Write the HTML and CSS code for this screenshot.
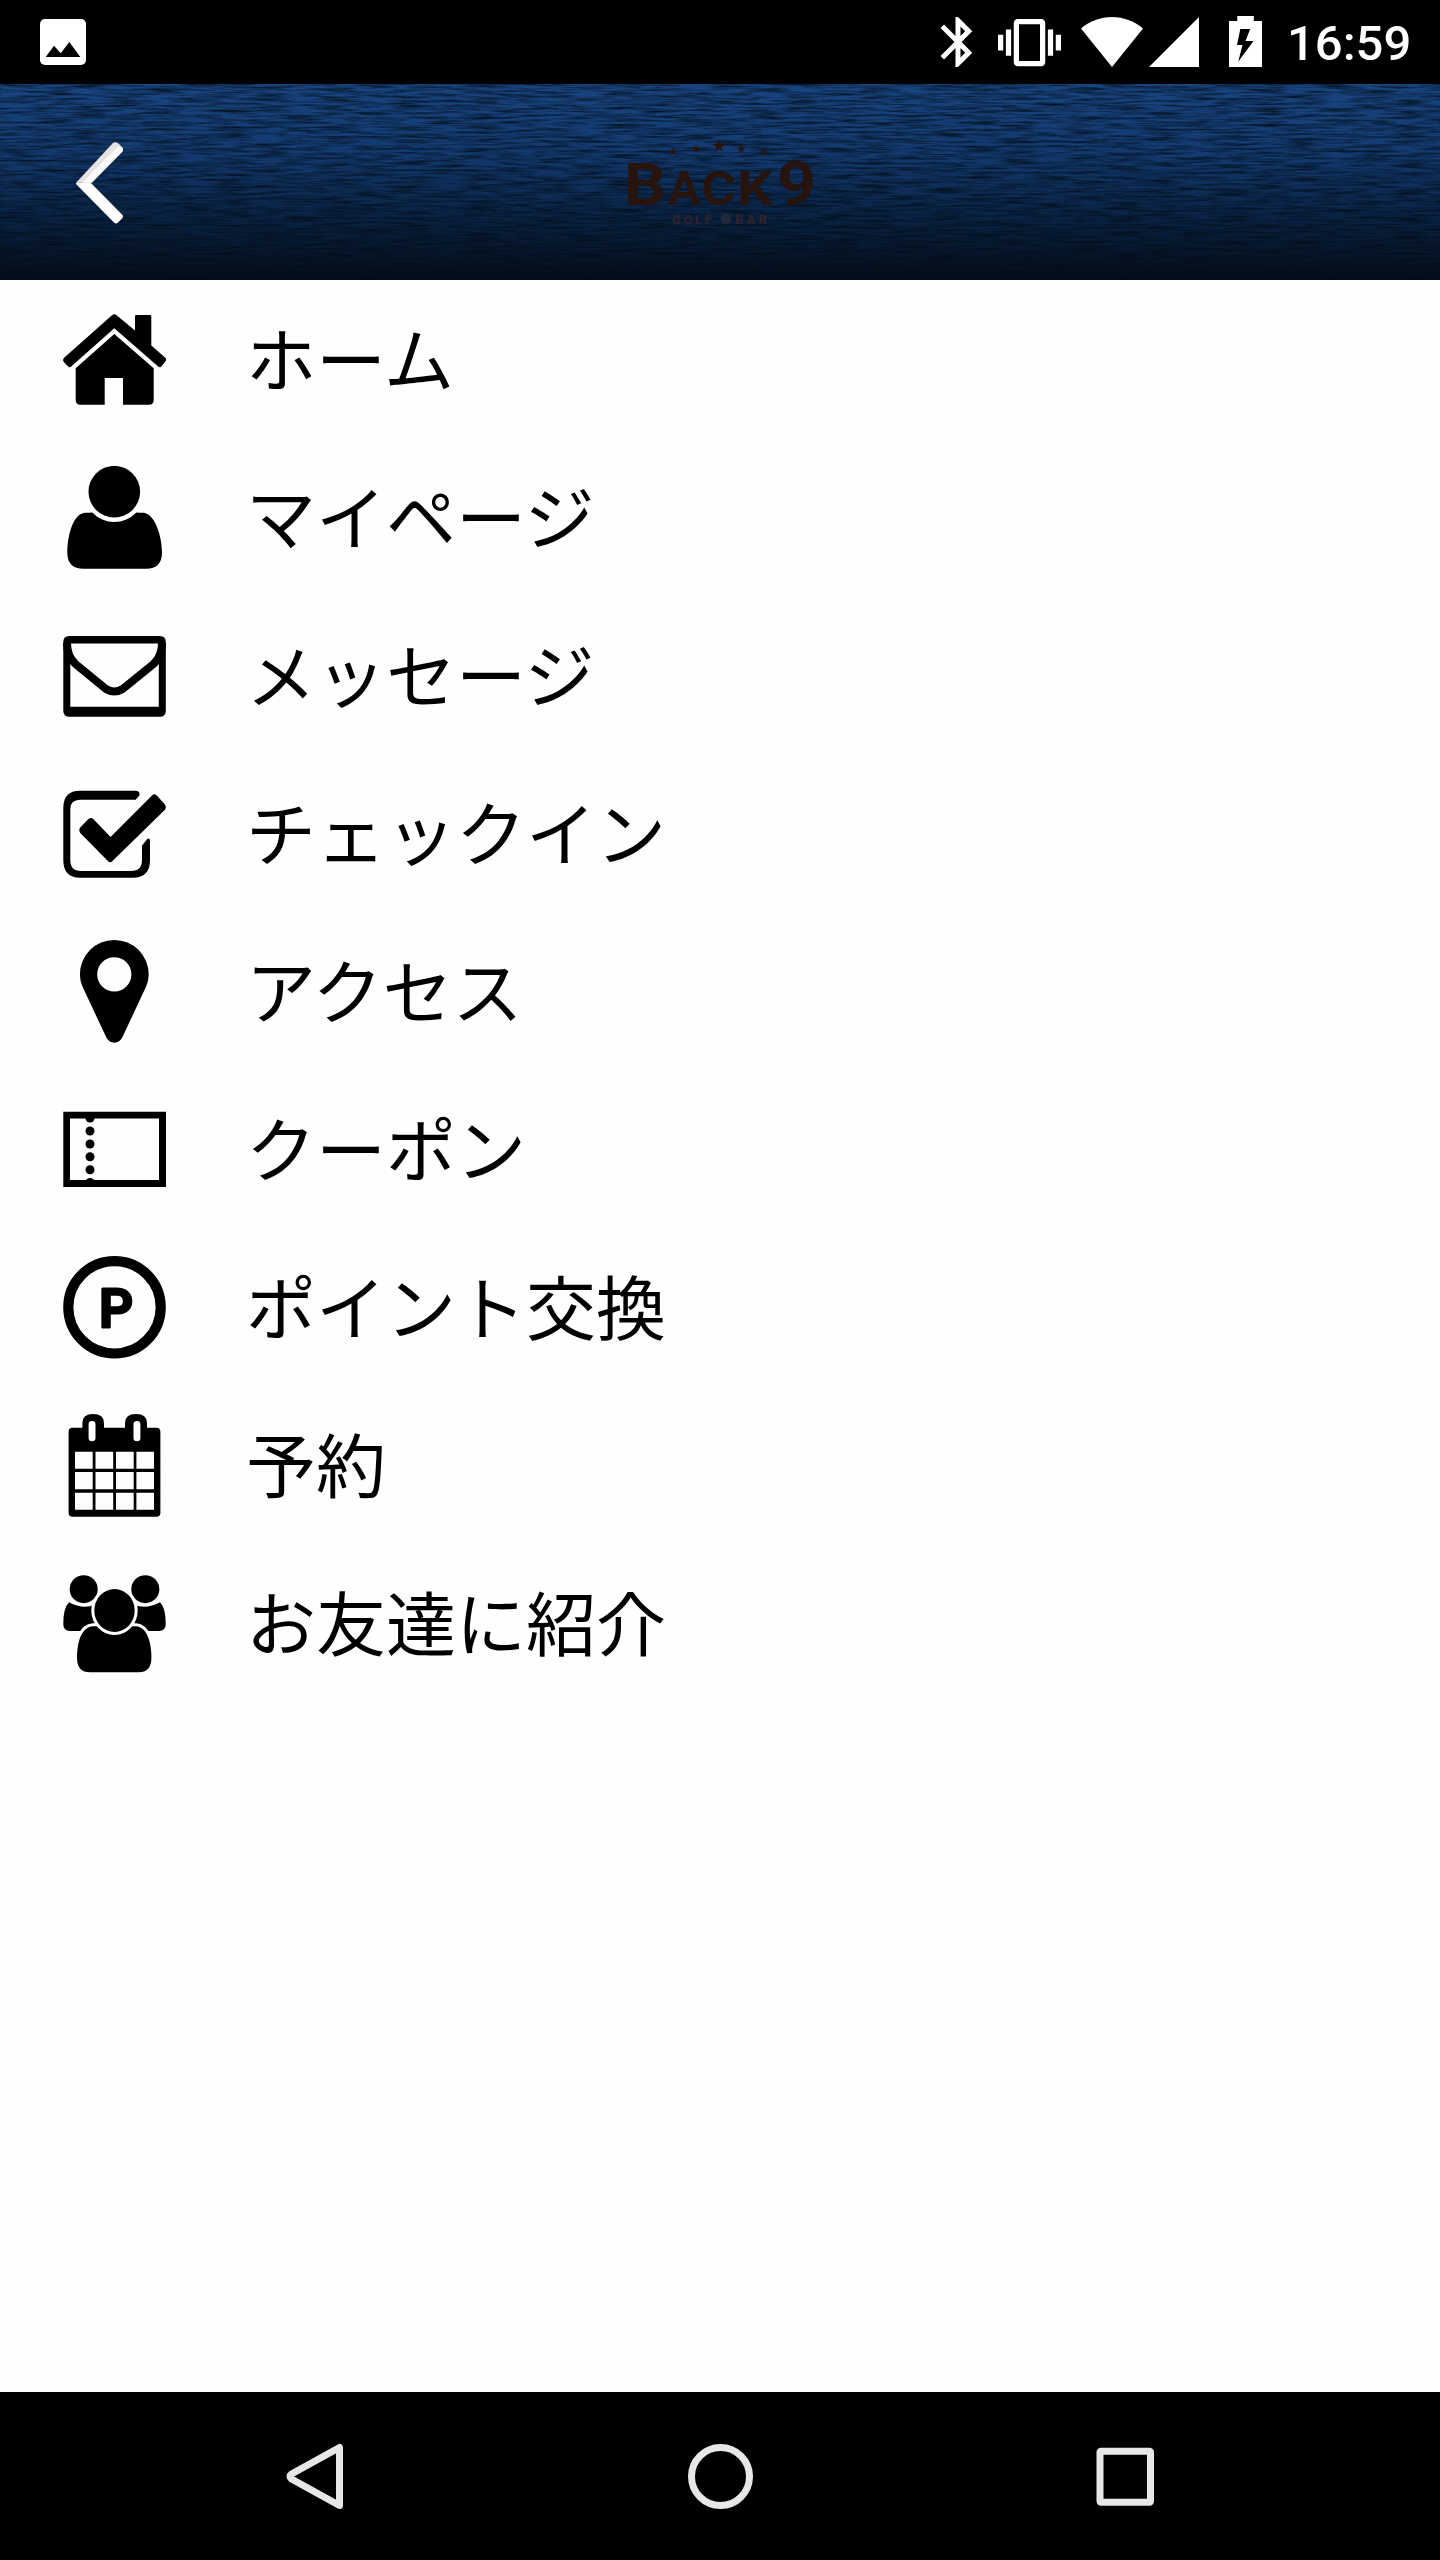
FILE: index.html
```html
<!DOCTYPE html>
<html lang="ja">
<head>
<meta charset="utf-8">
<title>BACK9 メニュー</title>
<link rel="stylesheet" href="styles.css">
</head>
<body>
<div class="screen">
  <div class="status">
    <svg class="status-photo" width="46" height="46" viewBox="0 0 46 46"><rect width="46" height="46" rx="5" fill="#fff"/><path d="M5.7 38 14 26.7l6.7 7.6L29.3 23l11 15z"/></svg>
    <div class="status-right">
      <svg class="bt" width="60" height="60" viewBox="0 0 24 24"><path d="M17.71 7.71L12 2h-1v7.59L6.41 5 5 6.41 10.59 12 5 17.59 6.41 19 11 14.41V22h1l5.71-5.71-4.3-4.29 4.3-4.29zM13 5.83l1.88 1.88L13 9.59V5.83zm1.88 10.46L13 18.17v-3.76l1.88 1.88z"/></svg>
      <svg class="vib" width="63" height="63" viewBox="0 0 24 24"><path d="M0 15h2V9H0v6zm3 2h2V7H3v10zm19-8v6h2V9h-2zm-3 8h2V7h-2v10zM16.5 3h-9C6.67 3 6 3.67 6 4.5v15c0 .83.67 1.5 1.5 1.5h9c.83 0 1.5-.67 1.5-1.5v-15c0-.83-.67-1.5-1.5-1.5zM16 19H8V5h8v14z"/></svg>
      <svg class="wifi" width="62" height="50" viewBox="0 0 62 50"><path d="M0 11.500C9 4 19.500 0 31 0s22 4 31 11.500L31 50z"/></svg>
      <svg class="cell" width="50" height="50" viewBox="0 0 50 50"><path d="M0 50h50V0z"/></svg>
      <svg class="batt" width="33" height="51" viewBox="0 0 33 51"><path fill-rule="evenodd" d="M8.300 0h16.500v5H33v46H0V5h8.300zM11.300 13 8 29h5.500L9.200 45.700 24.500 25H16.500L21.200 13z"/></svg>
      <span class="time">16:59</span>
    </div>
  </div>

  <header class="bar">
    <svg class="grain" width="1440" height="196">
      <filter id="grain" x="0" y="0" width="100%" height="100%" color-interpolation-filters="sRGB">
        <feTurbulence type="fractalNoise" baseFrequency="0.028 0.42" numOctaves="4" seed="12"/>
        <feColorMatrix values="0 0 0 0 0.01  0 0 0 0 0.05  0 0 0 0 0.09  1.700 0 0 0 -0.600"/>
      </filter>
      <rect width="1440" height="196" filter="url(#grain)"/>
    </svg>
    <svg class="back" width="60" height="92" viewBox="70 136 60 92">
      <path d="m112.500 143.500q3.500-2.500 6.500.5l3 3q2 2 0 5L92 182.700 76 182.700z" fill="#e6e2e4"/>
      <path d="m118 146.500 4 .8q2 2 0 4.700L91 182.700H82z" fill="#fbfafb"/>
      <path d="M76 182.700H90.700L122 214.500q2 2 0 4l-4 4q-2 2-4 0L76.500 184.500z" fill="#fff"/>
    </svg>
    <svg class="logo" width="200" height="96" viewBox="620 134 200 96">
      <defs><path id="star" d="M0-7 1.700-2.200 6.700-2.200 2.700.9 4.100 5.700 0 2.800-4.100 5.700-2.700.9-6.700-2.200-1.700-2.200z"/></defs>
      <use href="#star" transform="translate(673 151.500) scale(.6)"/>
      <use href="#star" transform="translate(696 149) scale(.72)"/>
      <use href="#star" transform="translate(719 146)"/>
      <use href="#star" transform="translate(741 149) scale(.72)"/>
      <use href="#star" transform="translate(764 152) scale(.6)"/>
      <text class="logo-big" x="624" y="204.500" textLength="42" lengthAdjust="spacingAndGlyphs">B</text>
      <text class="logo-small" x="667.500" y="204.500" textLength="33" lengthAdjust="spacingAndGlyphs">A</text>
      <text class="logo-small" x="701.500" y="204.500" textLength="34" lengthAdjust="spacingAndGlyphs">C</text>
      <text class="logo-small" x="737" y="204.500" textLength="36" lengthAdjust="spacingAndGlyphs">K</text>
      <text class="logo-nine" x="777" y="204.500" textLength="39" lengthAdjust="spacingAndGlyphs">9</text>
      <text class="logo-sub" x="672 683.500 695 704.500" y="223.500">GOLF</text>
      <circle cx="726" cy="218.500" r="5.500" class="ball"/>
      <text class="logo-sub" x="735 746.500 758.500" y="223.500">BAR</text>
    </svg>
  </header>

  <main class="menu">
    <div class="item">
      <svg class="icon" viewBox="0 0 104 104">
        <path d="M49 7.200q2.300-1.900 4.600 0L72 22.500V8.300q0-1.300 1.300-1.300h13.700q1.300 0 1.300 1.300V37.500L102 49.500q2 2 .3 4L98.500 58.300q-1.600 1.800-3.400.2L51.300 20.300 8.200 58.500q-1.800 1.600-3.400-.2L.7 53.700q-1.400-2 .4-4z"/>
        <path d="M51.300 26 90.700 60.300V92q0 4.700-4.700 4.700H60V70H41.700V96.700H17.400q-4.700 0-4.700-4.700V60.300z"/>
      </svg>
      <span class="label">ホーム</span>
    </div>
    <div class="item">
      <svg class="icon" viewBox="0 0 104 104">
        <circle cx="51.300" cy="25.700" r="25.800"/>
        <path d="M22 46.700q4.500 0 7.300-.2a30 30 0 0 0 44 0q3.500.2 7.300.2C92 48 99 70 99 86.500q0 16.200-16 16.200H20.500q-16.200 0-16.200-16.200C4.300 70 10 47.500 22 46.700z"/>
      </svg>
      <span class="label">マイページ</span>
    </div>
    <div class="item">
      <svg class="icon" viewBox="0 0 104 104">
        <path fill-rule="evenodd" d="M6.300 12h90.500q6 0 6 6V86.700q0 6-6 6H6.300q-6 0-6-6V18q0-6 6-6zM7.300 19.500V82.700H95.800V19.500z"/>
        <path d="M4 19C4 30 8 36 12.500 40L43 65q8.300 5 16.600 0L90.500 40C95 36 99 30 99 19" fill="none" stroke="#000" stroke-width="8"/>
      </svg>
      <span class="label">メッセージ</span>
    </div>
    <div class="item">
      <svg class="icon" viewBox="0 0 104 104">
        <path d="M73.500 8.700q3.500.8 3 4.500l-3.800 4.500H17Q7.300 18 7.300 27V78Q7.300 89 18 89H68Q79 89 79 78V63.500l5.500-6.800q2.500-.7 2.500 2V78Q87 95.700 70 95.700H17Q.3 95.700.3 78V26Q.3 8.700 17 8.700z"/>
        <path d="M89 13.500q2.300-2.500 4.800 0L102 22.500q1.500 2 .2 5L49.500 79q-2.300 2.500-4.600 0L17.200 51q-1.800-3 0-5.500L25.500 37q2.500-2 5 .2L47.600 55z"/>
      </svg>
      <span class="label">チェックイン</span>
    </div>
    <div class="item">
      <svg class="icon" viewBox="0 0 104 104">
        <path fill-rule="evenodd" d="M51.300 0a34.400 34.400 0 0 1 34.400 34.400q0 6.600-2.800 12.600L59.500 97q-2.700 5.700-8.200 5.700T43.100 97L19.700 47q-2.800-6-2.800-12.600A34.400 34.400 0 0 1 51.300 0zm0 17.300a17.100 17.100 0 1 0 0 34.200 17.100 17.100 0 1 0 0-34.200z"/>
      </svg>
      <span class="label">アクセス</span>
    </div>
    <div class="item">
      <svg class="icon" viewBox="0 0 104 104">
        <path fill-rule="evenodd" d="M.3 13.700H103V89H.3zM7 20.500v61.500H96V20.500z"/>
        <circle cx="27" cy="20" r="4.500"/><circle cx="27" cy="33" r="4.500"/><circle cx="27" cy="46" r="4.500"/><circle cx="27" cy="58.700" r="4.500"/><circle cx="27" cy="71.700" r="4.500"/><circle cx="27" cy="84.500" r="4.500"/>
      </svg>
      <span class="label">クーポン</span>
    </div>
    <div class="item">
      <svg class="icon" viewBox="0 0 104 104">
        <circle cx="51.500" cy="51.300" r="46.200" fill="none" stroke="#000" stroke-width="10.200"/>
        <text class="point" x="36" y="70.500">P</text>
      </svg>
      <span class="label">ポイント交換</span>
    </div>
    <div class="item">
      <svg class="icon" viewBox="0 0 104 104">
        <path fill-rule="evenodd" d="M9.600 13.700h9.800V9q0-9 10.800-9T41 9v4.700H62V9q0-9 11-9t11 9v4.700h9.400q4 0 4 4V98.700q0 4-4 4H9.600q-4 0-4-4V17.700q0-4 4-4zM25.600 10v14q0 3.300 3.400 3.300T32.500 24V10q0-3-3.500-3t-3.400 3zM70.500 10v14q0 3.300 3.500 3.300t3.400-3.300V10q0-3-3.400-3t-3.500 3zM12 37.700h17.700v17H12zm20.500 0H50.200v17H32.500zm20.500 0h17.700v17H53zm20.400 0H91v17H73.400zM12 58h17.700v17.300H12zm20.500 0H50.200v17.300H32.500zm20.500 0h17.700v17.300H53zm20.400 0H91v17.300H73.400zM12 78.700h17.700v17H12zm20.500 0H50.200v17H32.500zm20.500 0h17.700v17H53zm20.400 0H91v17H73.400z"/>
      </svg>
      <span class="label">予約</span>
    </div>
    <div class="item">
      <svg class="icon" viewBox="0 0 104 104">
        <circle cx="20.700" cy="17.200" r="14"/><circle cx="82.300" cy="17.200" r="14"/>
        <path d="M6 30.300Q20 38 32 32.500V59H7Q.3 59 .3 52 .3 36 6 30.300zM97 30.300Q83 38 71 32.500V59H96q6.700 0 6.700-7Q102.700 36 97 30.300z"/>
        <path class="cut" d="M30 54.200h43c11.500 1 15.400 17 15.400 31.500q0 14.600-13 14.600H27q-13 0-13-14.600C14 71 18 55 30 54.200z"/>
        <ellipse class="cut" cx="51.500" cy="38.500" rx="20.200" ry="21.400"/>
      </svg>
      <span class="label">お友達に紹介</span>
    </div>
  </main>

  <nav class="nav">
    <svg width="72" height="72" viewBox="0 0 72 72"><path d="M60.500 7.500v58L12.500 39q-3-2.500 0-5z"/></svg>
    <svg width="72" height="72" viewBox="0 0 72 72"><circle cx="36.500" cy="36.500" r="29"/></svg>
    <svg width="72" height="72" viewBox="0 0 72 72"><rect x="11" y="11.200" width="50.500" height="51" rx="1"/></svg>
  </nav>
</div>
</body>
</html>
```
FILE: styles.css
```css
body {
  margin: 0;
  background: #fefefe;
}

.screen {
  display: flex;
  flex-direction: column;
  width: 1440px;
  height: 2560px;
  overflow: hidden;
}

svg {
  display: block;
  flex: none;
}

.status {
  display: flex;
  justify-content: space-between;
  height: 84px;
  flex: none;
  background: #000;
}

.status-photo {
  margin: 19px 0 0 40px;
}

.status-right {
  display: flex;
  align-items: flex-start;
  padding-right: 29px;
  fill: #fff;
}

.bt { margin: 12px 10px 0 0; }
.vib { margin: 11px 20px 0 0; }
.wifi { margin: 17px 6px 0 0; }
.cell { margin: 17px 30px 0 0; }
.batt { margin: 16px 25px 0 0; }

.time {
  width: 124px;
  font: 500 49px/88px Roboto, sans-serif;
  color: #fff;
  white-space: nowrap;
}

.bar {
  position: relative;
  display: flex;
  align-items: center;
  height: 196px;
  flex: none;
  background: linear-gradient(#184581, #133b72 35%, #0a2549 65%, #040c18);
}

.grain {
  position: absolute;
  inset: 0;
}

.back {
  position: relative;
  margin-left: 70px;
}

.logo {
  position: relative;
  margin-left: 490px;
  fill: #28140f;
}

.logo text {
  font-family: Roboto, sans-serif;
  font-weight: 700;
}

.logo .logo-big { font-size: 59px; }
.logo .logo-small { font-size: 49px; }
.logo .logo-nine { font-size: 61px; }
.logo .logo-sub { font-size: 13px; fill: #302428; }

.ball {
  fill: #20293a;
}

.menu {
  flex: 1;
}

.item {
  display: flex;
  height: 158px;
}

.icon {
  width: 104px;
  height: 104px;
  margin: 28px 79px 0 63px;
}

.label {
  font: 400 70px/154px "Noto Sans CJK JP", sans-serif;
  color: #000;
  white-space: nowrap;
}

.point {
  font: 500 53px Roboto, sans-serif;
  stroke: #000;
  stroke-width: 3px;
  stroke-linejoin: round;
}

.cut {
  stroke: #fefefe;
  stroke-width: 6px;
  paint-order: stroke;
}

.nav {
  display: grid;
  grid-template-columns: repeat(3, 405px);
  justify-content: center;
  justify-items: center;
  align-items: center;
  height: 168px;
  flex: none;
  background: #000;
  fill: none;
  stroke: #e9e6e9;
  stroke-width: 7px;
  stroke-linejoin: round;
}
```
